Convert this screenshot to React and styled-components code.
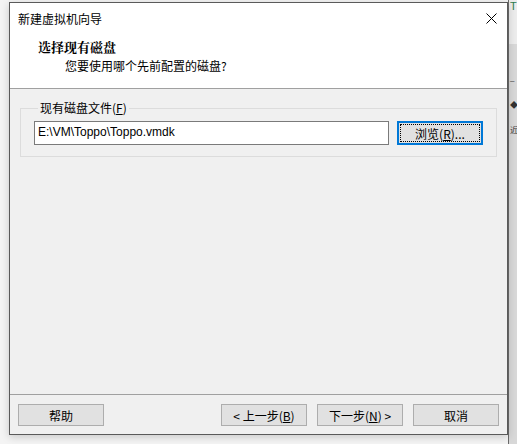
import styled, { createGlobalStyle } from 'styled-components';

const GlobalStyle = createGlobalStyle`
  html, body {
    margin: 0;
    padding: 0;
    background: #f4f4f4;
    font-family: "Liberation Sans", "Noto Sans CJK SC", sans-serif;
    font-size: 12px;
    color: #000000;
  }
`;

const Desktop = styled.div`
  display: flex;
  width: 517px;
  height: 444px;
  overflow: hidden;
`;

const Gutter = styled.div`
  width: 9px;
  flex: none;
`;

const Window = styled.div`
  width: 499px;
  height: 433px;
  margin-top: 2px;
  flex: none;
  box-sizing: border-box;
  border: 1px solid #5a5a5a;
  background: #f0f0f0;
  display: flex;
  flex-direction: column;
  box-shadow: 0 2px 8px rgba(0, 0, 0, 0.18);
  position: relative;
  z-index: 1;
`;

const BackApp = styled.div`
  flex: 1;
  display: flex;
  flex-direction: column;
  background: #d8d8d8;
  border-left: 1px solid #6b6b6b;
  overflow: hidden;
`;

const BackTop = styled.div`
  height: 44px;
  background: #ececec;
  color: #2e7d4f;
  font-size: 11px;
  line-height: 13px;
  padding-left: 1px;
`;

const BackBody = styled.div`
  flex: 1;
  display: flex;
  flex-direction: column;
  gap: 14px;
  padding-top: 32px;
  padding-left: 1px;
  color: #333;
  font-size: 8px;
`;

const TitleBar = styled.div`
  height: 30px;
  flex: none;
  background: #ffffff;
  display: flex;
  align-items: center;
  justify-content: space-between;
  padding: 0 10px 0 8px;
  font-family: "Noto Sans CJK SC", sans-serif;
  font-size: 12px;
`;

const Header = styled.div`
  height: 56px;
  flex: none;
  background: #ffffff;
  border-bottom: 1px solid #a0a0a0;
  padding: 6px 0 0 28px;
  box-sizing: border-box;
  display: flex;
  flex-direction: column;
  gap: 3px;
`;

const HeaderTitle = styled.div`
  font-family: "Noto Serif CJK SC", "Noto Sans CJK SC", serif;
  font-weight: 700;
  font-size: 13px;
  line-height: 16px;
`;

const HeaderSub = styled.div`
  font-family: "Noto Sans CJK SC", sans-serif;
  font-size: 12px;
  line-height: 16px;
  padding-left: 27px;
`;

const Body = styled.div`
  flex: 1;
  padding: 12px 10px 0 10px;
`;

const Group = styled.fieldset`
  margin: 0;
  border: 1px solid #dcdcdc;
  padding: 6px 13px 10px 13px;
  height: 56px;
  box-sizing: border-box;
  display: flex;
  gap: 8px;
  align-items: flex-start;
`;

const Legend = styled.legend`
  padding: 0 2px;
  margin-left: 4px;
  font-family: "Noto Sans CJK SC", sans-serif;
  font-size: 12px;
  line-height: 14px;
`;

const PathInput = styled.div`
  width: 355px;
  height: 24px;
  box-sizing: border-box;
  border: 1px solid #7a7a7a;
  background: #ffffff;
  padding: 0 3px;
  line-height: 21px;
  font-size: 12px;
`;

const Button = styled.div`
  width: ${(p) => p.$w || 86}px;
  height: 22px;
  box-sizing: border-box;
  border: 1px solid #adadad;
  background: #e1e1e1;
  display: flex;
  align-items: center;
  justify-content: center;
  font-family: "Noto Sans CJK SC", sans-serif;
  font-size: 12px;
  color: #000;
`;

const FocusButton = styled(Button)`
  height: 24px;
  border: 2px solid #0078d7;
  padding: 1px;
  & > span {
    flex: 1;
    align-self: stretch;
    border: 1px dotted #000;
    display: flex;
    align-items: center;
    justify-content: center;
  }
`;

const Footer = styled.div`
  flex: none;
  box-sizing: border-box;
  border-top: 1px solid #a0a0a0;
  height: 40px;
  display: flex;
  align-items: flex-start;
  padding: 9px 8px 0 8px;
  gap: 10px;
`;

const Spacer = styled.div`
  flex: 1;
`;

const Key = styled.u`
  color: #000;
`;

const Close = () => (
  <svg width="11" height="11" viewBox="0 0 11 11">
    <path d="M0.5 0.5 L10.5 10.5 M10.5 0.5 L0.5 10.5" stroke="#000" strokeWidth="1" />
  </svg>
);

export default function App() {
  return (
    <>
      <GlobalStyle />
      <Desktop>
        <Gutter />
        <Window>
          <TitleBar>
            <span>新建虚拟机向导</span>
            <Close />
          </TitleBar>
          <Header>
            <HeaderTitle>选择现有磁盘</HeaderTitle>
            <HeaderSub>您要使用哪个先前配置的磁盘?</HeaderSub>
          </Header>
          <Body>
            <Group>
              <Legend>现有磁盘文件(<Key>F</Key>)</Legend>
              <PathInput>E:\VM\Toppo\Toppo.vmdk</PathInput>
              <FocusButton>
                <span>浏览(<Key>R</Key>)...</span>
              </FocusButton>
            </Group>
          </Body>
          <Footer>
            <Button>帮助</Button>
            <Spacer />
            <Button>&lt; 上一步(<Key>B</Key>)</Button>
            <Button>下一步(<Key>N</Key>) &gt;</Button>
            <Button>取消</Button>
          </Footer>
        </Window>
        <BackApp>
          <BackTop>T</BackTop>
          <BackBody>
            <span>–</span>
            <span>◆</span>
            <span>近</span>
          </BackBody>
        </BackApp>
      </Desktop>
    </>
  );
}
